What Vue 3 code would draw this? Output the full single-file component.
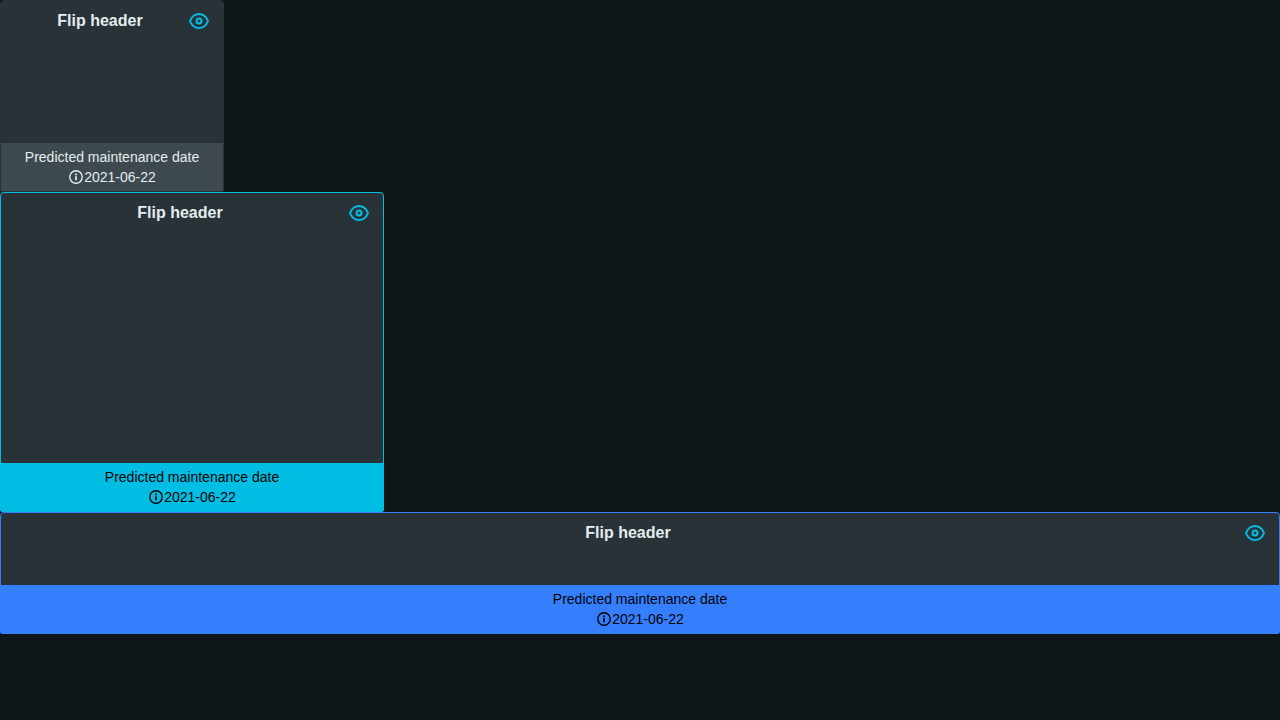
<script setup>
const cards = [
  { id: 'filtered', date: '2021-06-22' },
  { id: 'info', date: '2021-06-22' },
  { id: 'primary', date: '2021-06-22' },
]
</script>

<template>
  <main class="tiles">
    <article v-for="card in cards" :key="card.id" class="card" :class="card.id">
      <header class="card-header">
        <h2 class="title">Flip header</h2>
        <button class="flip" type="button" aria-label="Flip card">
          <svg viewBox="0 0 24 24" width="24" height="24" fill="none" stroke="currentColor" stroke-width="2" stroke-linejoin="round" aria-hidden="true">
            <path d="M12 5C16.4 5 19.4 8 21 12C19.4 16 16.4 19 12 19C7.6 19 4.6 16 3 12C4.6 8 7.6 5 12 5Z" />
            <circle cx="12" cy="12" r="2.5" />
          </svg>
        </button>
      </header>
      <div class="card-content"></div>
      <footer class="card-footer">
        <span>Predicted maintenance date</span>
        <span class="date">
          <svg viewBox="0 0 16 16" width="16" height="16" aria-hidden="true">
            <circle cx="8" cy="8" r="6.2" fill="none" stroke="currentColor" stroke-width="1.4" />
            <path d="M7.1 4.6H8.9V6.2H7.1ZM7.1 7.2H8.9V11.3H7.1Z" fill="currentColor" />
          </svg>
          <time :datetime="card.date">{{ card.date }}</time>
        </span>
      </footer>
    </article>
  </main>
</template>

<style>
body {
  background: #0f1619;
}
</style>

<style scoped>
.tiles {
  font-family: "Liberation Sans", Arial, sans-serif;
  font-size: 14px;
  line-height: 20px;
  color: #e4edf0;
}
.card {
  box-sizing: border-box;
  display: flex;
  flex-direction: column;
  overflow: hidden;
  border: 1px solid #293237;
  border-radius: 4px 4px 2px 2px;
  background: #293237;
}
.filtered {
  width: 14rem;
  min-height: 12rem;
}
.info {
  width: 24rem;
  min-height: 20rem;
  border-color: #00bde3;
}
.primary {
  border-color: #357fff;
}
.card-header {
  display: flex;
  align-items: center;
  padding: 8px 12px;
}
.title {
  flex: 1;
  margin: 0;
  font-size: 16px;
  line-height: 24px;
  font-weight: 700;
  text-align: center;
}
.flip {
  display: flex;
  padding: 0;
  border: 0;
  background: none;
  color: #00bde3;
  cursor: pointer;
}
.card-content {
  flex: 1;
  padding: 16px;
}
.card-footer {
  display: flex;
  flex-direction: column;
  align-items: center;
  padding: 4px;
  background: #3d494e;
}
.info .card-footer {
  background: #00bde3;
  color: #000;
}
.primary .card-footer {
  background: #357fff;
  color: #000;
}
.date {
  display: flex;
  align-items: center;
}
</style>
